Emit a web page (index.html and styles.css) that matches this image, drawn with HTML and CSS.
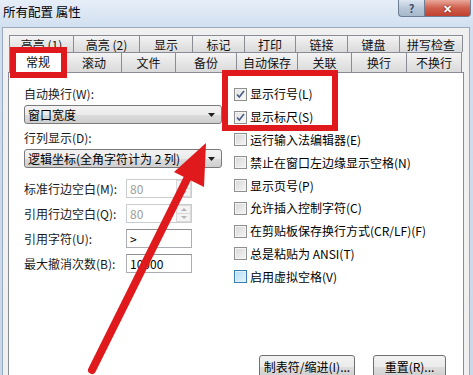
FILE: index.html
```html
<html>
    <head>
        <title>所有配置 属性</title>
        <link rel="stylesheet" href="styles.css">
    </head>
    <body>
        <div class="window">
            <div class="titlebar">
                <span class="title">所有配置 属性</span>
                <div class="caption-buttons">
                    <span class="help">?</span>
                    <span class="close">✕</span>
                </div>
            </div>
            <div class="client">
                <div class="tabs">
                    <div class="tab-row back">
                        <span class="tab w64">高亮 (1)</span>
                        <span class="tab w66">高亮 (2)</span>
                        <span class="tab w53">显示</span>
                        <span class="tab w52">标记</span>
                        <span class="tab w51">打印</span>
                        <span class="tab w52">链接</span>
                        <span class="tab w52">键盘</span>
                        <span class="tab w64 last">拼写检查</span>
                    </div>
                    <div class="tab-row front">
                        <span class="tab w58 selected">常规</span>
                        <span class="tab w55">滚动</span>
                        <span class="tab w54">文件</span>
                        <span class="tab w61">备份</span>
                        <span class="tab w61">自动保存</span>
                        <span class="tab w54">关联</span>
                        <span class="tab w55">换行</span>
                        <span class="tab w56 last">不换行</span>
                    </div>
                </div>
                <div class="panel">
                    <div class="panel-main">
                        <div class="col-left">
                            <div class="field-label">自动换行(W):</div>
                            <div class="combo">
                                <span>窗口宽度</span>
                                <svg class="combo-arrow" width="7" height="4" viewBox="0 0 7 4"><path d="M0 0h7L3.5 4z" fill="#1e1e1e"/></svg>
                            </div>
                            <div class="field-label second">行列显示(D):</div>
                            <div class="combo">
                                <span>逻辑坐标(全角字符计为 2 列)</span>
                                <svg class="combo-arrow" width="7" height="4" viewBox="0 0 7 4"><path d="M0 0h7L3.5 4z" fill="#1e1e1e"/></svg>
                            </div>
                            <div class="spin-row first">
                                <span class="row-label">标准行边空白(M):</span>
                                <div class="input disabled">
                                    <span>80</span>
                                    <div class="spin">
                                        <span class="up"></span>
                                        <span class="down"></span>
                                    </div>
                                </div>
                            </div>
                            <div class="spin-row">
                                <span class="row-label">引用行边空白(Q):</span>
                                <div class="input disabled">
                                    <span>80</span>
                                    <div class="spin">
                                        <span class="up"></span>
                                        <span class="down"></span>
                                    </div>
                                </div>
                            </div>
                            <div class="spin-row">
                                <span class="row-label">引用字符(U):</span>
                                <div class="input"><span>&gt;</span></div>
                            </div>
                            <div class="spin-row">
                                <span class="row-label">最大撤消次数(B):</span>
                                <div class="input"><span>10000</span></div>
                            </div>
                        </div>
                        <div class="col-right">
                            <label class="check"><span class="box checked"><svg width="9" height="9" viewBox="0 0 9 9"><path d="M1 4.5l2.3 2.6L8 1" fill="none" stroke="#4a5d87" stroke-width="1.6"/></svg></span>显示行号(L)</label>
                            <label class="check"><span class="box checked"><svg width="9" height="9" viewBox="0 0 9 9"><path d="M1 4.5l2.3 2.6L8 1" fill="none" stroke="#4a5d87" stroke-width="1.6"/></svg></span>显示标尺(S)</label>
                            <label class="check"><span class="box"></span>运行输入法编辑器(E)</label>
                            <label class="check"><span class="box"></span>禁止在窗口左边缘显示空格(N)</label>
                            <label class="check"><span class="box"></span>显示页号(P)</label>
                            <label class="check"><span class="box"></span>允许插入控制字符(C)</label>
                            <label class="check"><span class="box"></span>在剪贴板保存换行方式(CR/LF)(F)</label>
                            <label class="check"><span class="box"></span>总是粘贴为 ANSI(T)</label>
                            <label class="check"><span class="box hot"></span>启用虚拟空格(V)</label>
                        </div>
                    </div>
                    <div class="panel-foot">
                        <button class="btn tabs-btn">制表符/缩进(I)...</button>
                        <button class="btn reset-btn">重置(R)...</button>
                    </div>
                </div>
            </div>
            <!-- red annotations drawn over the dialog -->
            <div class="mark mark-tab"></div>
            <div class="mark mark-checks"></div>
            <svg class="arrow" width="473" height="375" viewBox="0 0 473 375">
                <line x1="92" y1="370" x2="189" y2="175" stroke="#e01a1c" stroke-width="8" stroke-linecap="round"/>
                <polygon points="206,143 174,172 204,187" fill="#e01a1c"/>
            </svg>
        </div>
    </body>
</html>
```

FILE: styles.css
```css
body{
    margin:0;
    width:473px;
    height:375px;
    overflow:hidden;
    font-family:"Noto Sans CJK SC","Microsoft YaHei",sans-serif;
    font-size:12px;
    color:#1a1a1a;
    background:linear-gradient(#e6eef8,#d0deef 30px,#c9d8ea);
}
.window{
    position:relative;
    height:375px;
}
.titlebar{
    height:27px;
    display:flex;
    justify-content:space-between;
    align-items:flex-start;
}
.title{
    padding:4px 0 0 3px;
    font-size:12.5px;
    line-height:16px;
    color:#000;
}
.caption-buttons{
    display:flex;
    margin-right:2px;
}
.help,.close{
    height:17px;
    display:flex;
    align-items:center;
    justify-content:center;
    border:1px solid #6d7d92;
    border-top:none;
    box-sizing:border-box;
}
.help{
    width:26px;
    border-radius:0 0 0 4px;
    border-right:none;
    background:linear-gradient(#dde6f0,#b8c7d8 50%,#a7b8cc);
    color:#3d4d62;
    font-size:11px;
    font-weight:bold;
}
.close{
    width:47px;
    border-radius:0 0 4px 0;
    background:linear-gradient(#e9a99b,#cf5f4d 50%,#c0402f);
    color:#fff;
    font-size:11px;
    font-weight:bold;
    text-shadow:0 0 2px #5a1010;
}
.client{
    margin:0 3px 0 2px;
    height:348px;
    box-sizing:border-box;
    background:#f0f0f0;
    border:1px solid #9aa9bb;
    border-bottom:none;
    padding:7px 5px 0 5px;
}
.tabs{
    margin:0 1px;
}
.tab-row{
    display:flex;
    align-items:flex-start;
}
.tab-row.back{
    height:17px;
}
.tab-row.front{
    height:20px;
}
.tab{
    flex:none;
    box-sizing:border-box;
    height:100%;
    border-top:1px solid #898c95;
    border-left:1px solid #898c95;
    background:linear-gradient(#f4f4f4,#e6e6e6 50%,#dadada);
    display:flex;
    align-items:center;
    justify-content:center;
    line-height:16px;
    color:#111;
}
.back .tab{
    height:17px;
    padding-top:1px;
}
.front .tab{
    height:20px;
}
.tab.last{
    border-right:1px solid #898c95;
}
.tab.selected{
    position:relative;
    z-index:1;
    margin-top:-2px;
    height:23px;
    background:#fff;
    border-right:1px solid #898c95;
    margin-right:-1px;
}
.w51{width:51px;}
.w52{width:52px;}
.w53{width:53px;}
.w54{width:54px;}
.w55{width:55px;}
.w56{width:56px;}
.w58{width:58px;}
.w61{width:61px;}
.w64{width:64px;}
.w66{width:66px;}
.panel{
    background:#fff;
    border:1px solid #898c95;
    height:310px;
}
.panel-main{
    display:flex;
    height:282px;
}
.col-left{
    width:213px;
    box-sizing:border-box;
    padding:13px 0 0 15px;
}
.field-label{
    line-height:16px;
    height:16px;
}
.field-label.second{
    margin-top:6px;
}
.combo{
    margin-top:3px;
    height:19px;
    width:198px;
    box-sizing:border-box;
    border:1px solid #7a7a7a;
    border-radius:3px;
    background:linear-gradient(#f3f3f3,#ebebeb 50%,#dcdcdc 51%,#cfcfcf);
    display:flex;
    align-items:center;
    justify-content:space-between;
    padding:0 6px 0 3px;
    line-height:16px;
    color:#000;
}
.combo-arrow{
    flex:none;
}
.spin-row{
    display:flex;
    align-items:center;
    height:19px;
    margin-top:6px;
}
.spin-row.first{
    margin-top:11px;
}
.row-label{
    width:102px;
    flex:none;
    line-height:16px;
}
.input{
    width:66px;
    height:19px;
    box-sizing:border-box;
    border:1px solid #abadb3;
    border-top-color:#8e8f8f;
    display:flex;
    align-items:center;
    justify-content:space-between;
    padding-left:3px;
    line-height:16px;
    color:#000;
}
.input.disabled{
    border-color:#c9ccd0;
    color:#9d9d9d;
}
.spin{
    width:15px;
    height:17px;
    display:flex;
    flex-direction:column;
}
.spin span{
    flex:1;
    border:1px solid #dadada;
    background:#f4f4f4;
    display:flex;
    align-items:center;
    justify-content:center;
}
.spin .up{
    border-bottom:none;
}
.spin .up::after{
    content:"";
    border-left:3px solid transparent;
    border-right:3px solid transparent;
    border-bottom:3px solid #b4b4b4;
}
.spin .down::after{
    content:"";
    border-left:3px solid transparent;
    border-right:3px solid transparent;
    border-top:3px solid #b4b4b4;
}
.col-right{
    margin-left:12px;
    padding-top:10px;
}
.check{
    display:flex;
    align-items:center;
    height:22.8px;
    line-height:16px;
    color:#000;
    white-space:nowrap;
}
.box{
    width:13px;
    height:13px;
    box-sizing:border-box;
    margin-right:3px;
    border:1px solid #8e8f8f;
    background:linear-gradient(135deg,#d6d6d6,#f6f6f6);
    box-shadow:inset 0 0 0 1px #f4f4f4;
    display:flex;
    align-items:center;
    justify-content:center;
}
.box.checked{
    background:linear-gradient(135deg,#e2e2e2,#fafafa);
}
.box.hot{
    border-color:#3c7fb1;
    background:linear-gradient(135deg,#b3dcf3,#e6f5fd);
    box-shadow:inset 0 0 0 1px #def1fb;
}
.panel-foot{
    display:flex;
    justify-content:flex-end;
    gap:18px;
    padding-right:17px;
}
.btn{
    height:23px;
    box-sizing:border-box;
    border:1px solid #707070;
    border-radius:3px;
    background:linear-gradient(#f2f2f2,#ebebeb 50%,#dddddd 51%,#cfcfcf);
    font-family:"Noto Sans CJK SC","Microsoft YaHei",sans-serif;
    font-size:12px;
    color:#000;
    padding:0;
    line-height:16px;
}
.tabs-btn{
    width:96px;
}
.reset-btn{
    width:73px;
}
.mark{
    position:absolute;
    z-index:2;
    border:6px solid #e01a1c;
    box-sizing:border-box;
}
.mark-tab{
    left:10px;
    top:47px;
    width:57px;
    height:31px;
}
.mark-checks{
    left:222px;
    top:70px;
    width:116px;
    height:61px;
}
.arrow{
    position:absolute;
    z-index:2;
    left:0;
    top:0;
}
```
